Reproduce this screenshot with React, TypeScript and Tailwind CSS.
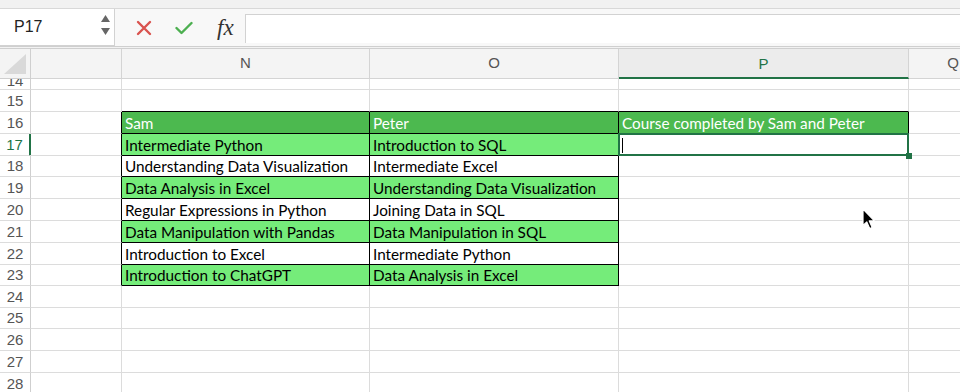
import clsx from 'clsx';

type Row = {
  n: number;
  h: string;
  sam?: string;
  peter?: string;
};

const rows: Row[] = [
  { n: 14, h: 'h-[11px]' },
  { n: 15, h: 'h-[22px]' },
  { n: 16, h: 'h-[22px]', sam: 'Sam', peter: 'Peter' },
  { n: 17, h: 'h-[22px]', sam: 'Intermediate Python', peter: 'Introduction to SQL' },
  { n: 18, h: 'h-[21px]', sam: 'Understanding Data Visualization', peter: 'Intermediate Excel' },
  { n: 19, h: 'h-[22px]', sam: 'Data Analysis in Excel', peter: 'Understanding Data Visualization' },
  { n: 20, h: 'h-[22px]', sam: 'Regular Expressions in Python', peter: 'Joining Data in SQL' },
  { n: 21, h: 'h-[22px]', sam: 'Data Manipulation with Pandas', peter: 'Data Manipulation in SQL' },
  { n: 22, h: 'h-[22px]', sam: 'Introduction to Excel', peter: 'Intermediate Python' },
  { n: 23, h: 'h-[21px]', sam: 'Introduction to ChatGPT', peter: 'Data Analysis in Excel' },
  { n: 24, h: 'h-[22px]' },
  { n: 25, h: 'h-[21px]' },
  { n: 26, h: 'h-[22px]' },
  { n: 27, h: 'h-[22px]' },
  { n: 28, h: 'h-[22px]' },
];

const cellFont = "font-['Lato','Noto_Sans',sans-serif] text-[15.3px] leading-none";

function fillFor(n: number) {
  if (n === 16) return 'bg-[#4cb94f] text-white';
  if (n >= 17 && n <= 23 && n % 2 === 1) return 'bg-[#75ec7a] text-black';
  return 'bg-white text-black';
}

function SheetRow({ row }: { row: Row }) {
  const inTable = row.n >= 16 && row.n <= 23;
  const selected = row.n === 17;
  return (
    <div className={clsx('flex', row.h)}>
      <div
        className={clsx(
          "flex w-[31px] shrink-0 justify-center overflow-hidden border-b border-[#dcdcdc] bg-white font-['Liberation_Sans',sans-serif] text-[15px]",
          row.n === 14 ? 'items-end pb-[1px] leading-none' : 'items-center pt-[1px]',
          selected ? 'border-r-2 border-r-[#217346] text-[#217346]' : 'border-r border-r-[#cfcfcf] text-[#555]',
        )}
      >
        {row.n}
      </div>
      <div
        className={clsx(
          'w-[91px] shrink-0 border-b border-r border-b-[#dcdcdc]',
          inTable ? 'border-r-black' : 'border-r-[#dcdcdc]',
          selected ? '-ml-px w-[92px]' : '',
        )}
      />
      <div
        className={clsx(
          'flex w-[248px] shrink-0 items-center border-b border-r pl-[3px] pt-[2px]',
          cellFont,
          inTable ? 'border-black' : 'border-[#dcdcdc]',
          row.n === 15 ? 'border-b-black' : '',
          inTable ? fillFor(row.n) : 'bg-white',
        )}
      >
        {row.sam}
      </div>
      <div
        className={clsx(
          'flex w-[249px] shrink-0 items-center border-b border-r pl-[3px] pt-[2px]',
          cellFont,
          inTable ? 'border-black' : 'border-[#dcdcdc]',
          row.n === 15 ? 'border-b-black' : '',
          inTable ? fillFor(row.n) : 'bg-white',
        )}
      >
        {row.peter}
      </div>
      <div
        className={clsx(
          'relative flex w-[290px] shrink-0 items-center border-b border-r pl-[3px] pt-[2px]',
          cellFont,
          row.n === 16 ? 'border-black bg-[#4cb94f] text-white' : 'border-[#dcdcdc] bg-white',
          row.n === 15 ? 'border-b-black' : '',
        )}
      >
        {row.n === 16 ? 'Course completed by Sam and Peter' : null}
        {selected ? (
          <>
            <div className="absolute -left-px -top-px bottom-[-1px] right-[-1px] border-2 border-[#217346]" />
            <div className="absolute left-[3px] top-[4px] h-[15px] w-px bg-black" />
            <div className="absolute bottom-[-4px] right-[-4px] z-10 h-[6px] w-[6px] bg-[#217346]" />
          </>
        ) : null}
      </div>
      <div className="flex-1 border-b border-[#dcdcdc] bg-white" />
    </div>
  );
}

function HeaderCell({ label, width, active }: { label: string; width: string; active?: boolean }) {
  return (
    <div
      className={clsx(
        "flex shrink-0 items-center justify-center border-r border-[#d4d4d4] font-['Liberation_Sans',sans-serif] text-[15px]",
        width,
        active ? 'border-b-2 border-b-[#217346] bg-[#ececec] pt-[2px] text-[#217346]' : 'border-b border-b-[#d4d4d4] bg-[#f4f4f4] text-[#555]',
      )}
    >
      {label}
    </div>
  );
}

function FormulaBar() {
  return (
    <div className="flex h-[37px] bg-[#f8f8f8]">
      <div className="relative flex w-[115px] shrink-0 items-center border-b border-r border-[#d2d2d2] bg-white pl-[14px] font-['Liberation_Sans',sans-serif] text-[16px] text-[#222]">
        P17
        <div className="absolute right-[4px] top-[6px] flex flex-col gap-[6px]">
          <svg width="9" height="7" viewBox="0 0 9 7">
            <path d="M4.5 0 L9 7 L0 7 Z" fill="#666" />
          </svg>
          <svg width="9" height="7" viewBox="0 0 9 7">
            <path d="M0 0 L9 0 L4.5 7 Z" fill="#666" />
          </svg>
        </div>
      </div>
      <div className="flex w-[130px] shrink-0 items-center">
        <svg className="ml-[21px]" width="16" height="16" viewBox="0 0 16 16">
          <path d="M2 2 L14 14 M14 2 L2 14" stroke="#d9534f" strokeWidth="2.4" strokeLinecap="round" />
        </svg>
        <svg className="ml-[23px]" width="18" height="14" viewBox="0 0 18 14">
          <path d="M1.5 7 L6.5 12 L16.5 2" stroke="#4caf50" strokeWidth="2.4" fill="none" strokeLinecap="round" strokeLinejoin="round" />
        </svg>
        <span className="ml-[24px] font-['Liberation_Serif',serif] text-[23px] italic leading-none text-[#333]">fx</span>
      </div>
      <div className="mt-[5px] mb-[3px] flex-1 border-l border-t border-[#d2d2d2] bg-white" />
    </div>
  );
}

function Cursor() {
  return (
    <svg className="pointer-events-none absolute left-[862px] top-[208px] z-20" width="14" height="23" viewBox="0 0 14 23">
      <path
        d="M1 1 L1 17.5 L4.8 13.9 L7.7 20.6 L10.2 19.5 L7.3 12.9 L12.4 12.9 Z"
        fill="#000"
        stroke="#fff"
        strokeWidth="1.2"
        strokeLinejoin="round"
      />
    </svg>
  );
}

export default function App() {
  return (
    <div className="relative h-[392px] w-[960px] overflow-hidden bg-white">
      <div className="h-[9px] border-b border-[#d8d8d8] bg-[#f1f1f1]" />
      <FormulaBar />
      <div className="h-[3px] border-b border-t border-[#cfcfcf] bg-[#f2f2f2]" />
      <div className="flex h-[30px]">
        <div className="relative w-[31px] shrink-0 border-b border-r border-[#cfcfcf] bg-[#f4f4f4]">
          <svg className="absolute bottom-[4px] right-[4px]" width="22" height="20" viewBox="0 0 22 20">
            <path d="M22 0 L22 20 L0 20 Z" fill="#d9d9d9" />
          </svg>
        </div>
        <HeaderCell label="" width="w-[91px]" />
        <HeaderCell label="N" width="w-[248px]" />
        <HeaderCell label="O" width="w-[249px]" />
        <HeaderCell label="P" width="w-[290px]" active />
        <div className="flex w-[88px] shrink-0 items-center justify-center border-b border-[#d4d4d4] bg-[#f4f4f4] font-['Liberation_Sans',sans-serif] text-[15px] text-[#555]">
          Q
        </div>
      </div>
      {rows.map((row) => (
        <SheetRow key={row.n} row={row} />
      ))}
      <Cursor />
    </div>
  );
}
